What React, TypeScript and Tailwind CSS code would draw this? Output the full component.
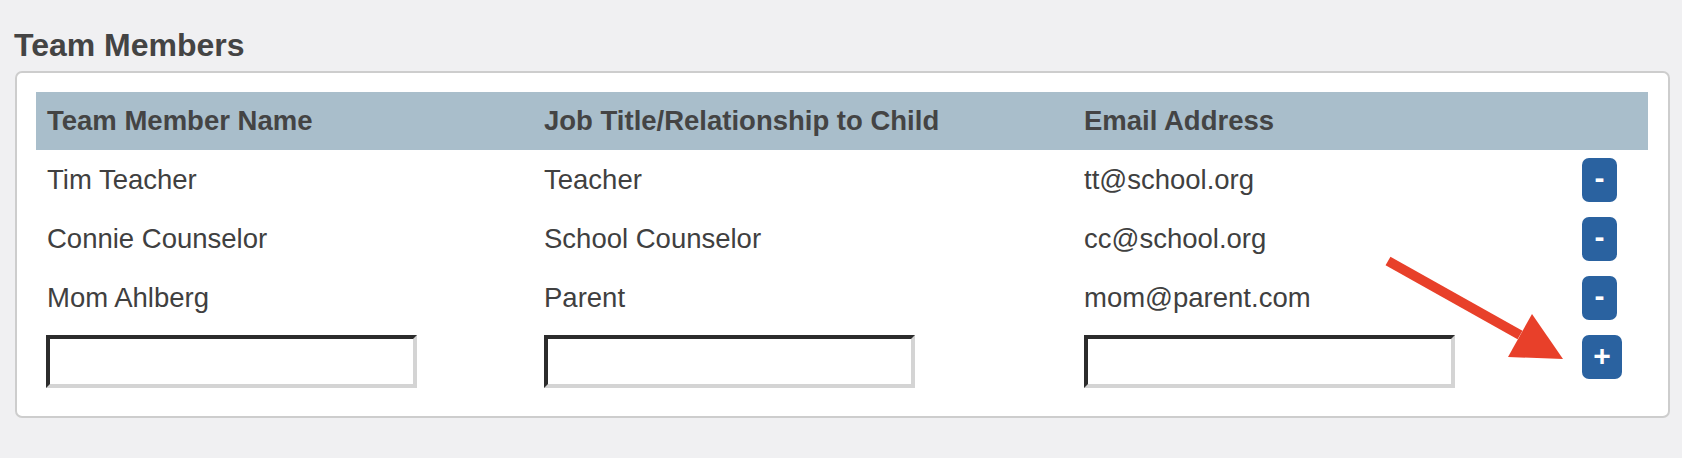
import React from "react";

const rows = [
  { name: "Tim Teacher", job: "Teacher", email: "tt@school.org" },
  { name: "Connie Counselor", job: "School Counselor", email: "cc@school.org" },
  { name: "Mom Ahlberg", job: "Parent", email: "mom@parent.com" },
];

const font = { fontFamily: '"Liberation Sans", Arial, Helvetica, sans-serif' };

function Input() {
  return (
    <input
      type="text"
      className="box-border h-[53px] w-[371px] border-4 border-t-[#2c2c2c] border-l-[#2c2c2c] border-r-[#d4d4d4] border-b-[#d4d4d4] bg-white outline-none"
    />
  );
}

export default function App() {
  return (
    <div
      className="relative min-h-screen w-full bg-[#f0f0f2] px-[15px] pt-[27px] text-[#444444]"
      style={font}
    >
      <h2 className="-ml-[1px] text-[32px] font-bold leading-[37px] text-[#444444]">
        Team Members
      </h2>
      <div className="mt-[7px] box-border w-[1655px] rounded-[7px] border-2 border-[#cdcdcd] bg-white pt-[19px] pl-[19px] pr-[20px] pb-[20px]">
        <div className="grid grid-cols-[497px_540px_498px_77px]">
          <div className="col-span-4 grid h-[58px] grid-cols-[497px_540px_498px_77px] items-center bg-[#a9becb] text-[27.5px] font-bold">
            <div className="pl-[11px]">Team Member Name</div>
            <div className="pl-[11px]">Job Title/Relationship to Child</div>
            <div className="pl-[11px]">Email Address</div>
            <div />
          </div>
          {rows.map((r) => (
            <div
              key={r.email}
              className="col-span-4 grid h-[59px] grid-cols-[497px_540px_498px_77px] items-center text-[27.5px] text-[#404040]"
            >
              <div className="pl-[11px]">{r.name}</div>
              <div className="pl-[11px]">{r.job}</div>
              <div className="pl-[11px]">{r.email}</div>
              <div className="pl-[11px]">
                <button
                  type="button"
                  className="flex h-[44px] w-[35px] items-center justify-center rounded-[7px] bg-[#2a62a0] pb-[3px] text-[30px] font-bold leading-none text-white"
                >
                  -
                </button>
              </div>
            </div>
          ))}
          <div className="col-span-4 grid grid-cols-[497px_540px_498px_77px] items-start py-[8px]">
            <div className="pl-[10px]">
              <Input />
            </div>
            <div className="pl-[11px]">
              <Input />
            </div>
            <div className="pl-[11px]">
              <Input />
            </div>
            <div className="pl-[11px]">
              <button
                type="button"
                className="flex h-[44px] w-[40px] items-center justify-center rounded-[7px] bg-[#2a62a0] pb-[2px] text-[30px] font-bold leading-none text-white"
              >
                +
              </button>
            </div>
          </div>
        </div>
      </div>
      <svg
        className="pointer-events-none absolute left-[1370px] top-[240px]"
        width="220"
        height="140"
        viewBox="0 0 220 140"
      >
        <line x1="18" y1="21" x2="150" y2="95" stroke="#e8402a" strokeWidth="10" />
        <polygon points="162,74 138,117 193,119" fill="#e8402a" />
      </svg>
    </div>
  );
}
